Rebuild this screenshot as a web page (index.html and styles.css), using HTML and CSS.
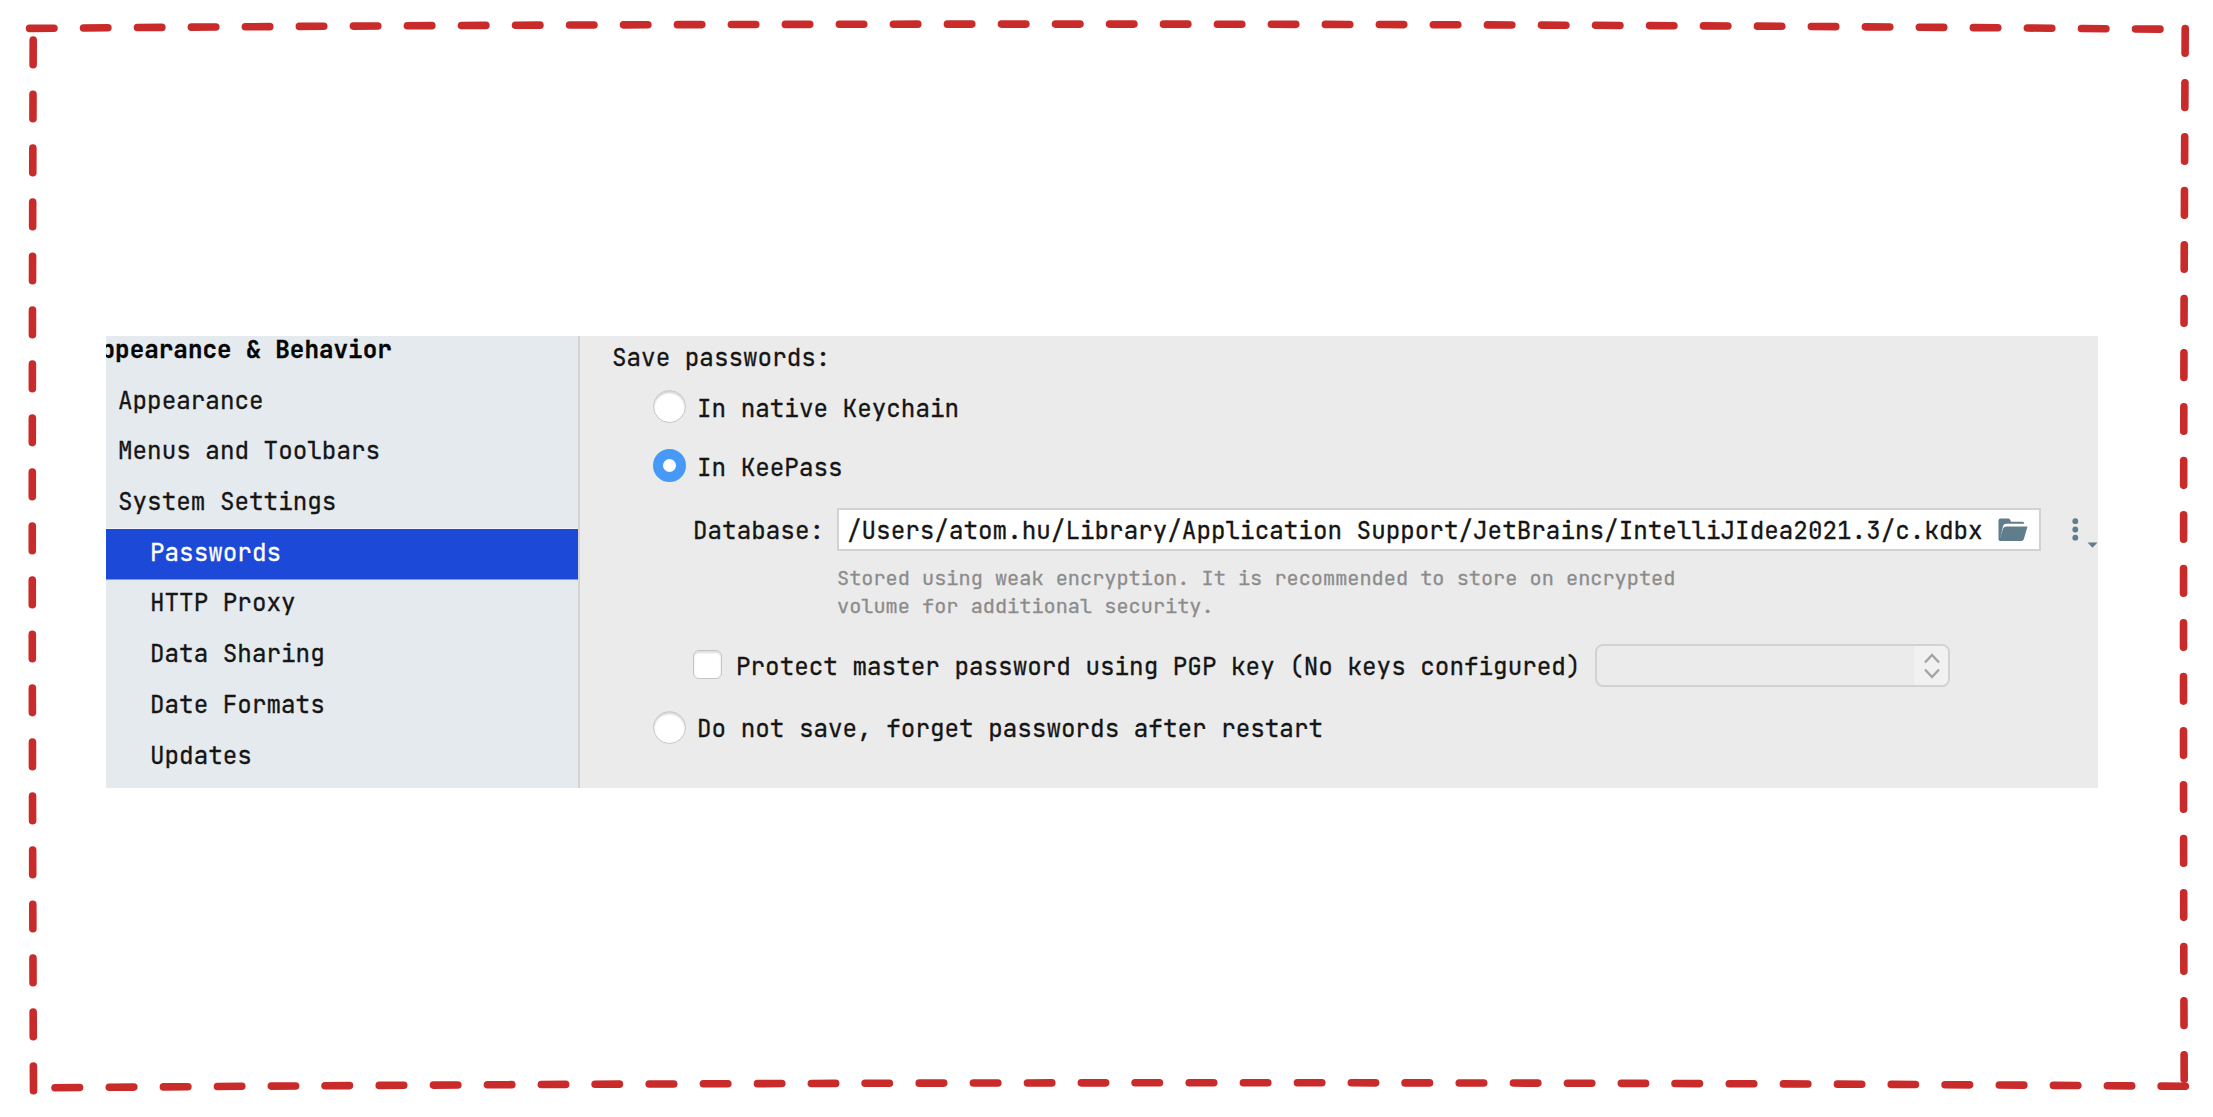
FILE: index.html
```html
<!DOCTYPE html>
<html lang="en">
<head>
<meta charset="utf-8">
<title>Passwords</title>
<link rel="stylesheet" href="styles.css">
</head>
<body>
<svg class="frame" viewBox="0 0 2213 1117" aria-hidden="true">
  <path class="h" d="M29.6 28.4Q1090 19.4 2165 29.2"/>
  <path class="h" d="M55 1087.7Q1180 1078.6 2186 1086.3"/>
  <path class="v" d="M33.2 40Q31.2 590 33.5 1093"/>
  <path class="v" d="M2185.2 28.5Q2182.4 590 2184.2 1082"/>
</svg>
<main class="window">
  <nav class="sidebar">
    <div class="item heading">Appearance &amp; Behavior</div>
    <div class="item">Appearance</div>
    <div class="item">Menus and Toolbars</div>
    <div class="item">System Settings</div>
    <div class="item sub selected">Passwords</div>
    <div class="item sub">HTTP Proxy</div>
    <div class="item sub">Data Sharing</div>
    <div class="item sub">Date Formats</div>
    <div class="item sub">Updates</div>
  </nav>
  <section class="content">
    <div class="title">Save passwords:</div>
    <div class="option native"><span class="radio"></span><span class="label">In native Keychain</span></div>
    <div class="option keepass"><span class="radio on"></span><span class="label">In KeePass</span></div>
    <div class="database">
      <span class="dblabel">Database:</span>
      <div class="field">
        <span class="path">/Users/atom.hu/Library/Application Support/JetBrains/IntelliJIdea2021.3/c.kdbx</span>
        <svg class="folder" viewBox="0 0 30 24"><path d="M.5 22V2.5Q.5.5 2.5.5H10q1.500 0 2 1l1 2.200h11.500q1.800 0 1.800 2H8q-2.200 0-2.800 2L2.200 19.500V22z"/><path d="M8.200 8.500H29.500L25.800 21.200Q25.300 23 23.400 23H2q-1.200 0-.8-1L5.200 10.300Q6 8.500 8.200 8.500z"/></svg>
      </div>
      <svg class="more" viewBox="0 0 26 30"><circle cx="3.300" cy="3.200" r="2.900"/><circle cx="3.300" cy="11.500" r="2.900"/><circle cx="3.300" cy="19.700" r="2.900"/><path d="M15.500 24.500h10l-5 5.300z"/></svg>
    </div>
    <p class="hint">Stored using weak encryption. It is recommended to store on encrypted<br>volume for additional security.</p>
    <div class="protect">
      <span class="check"></span>
      <span class="label">Protect master password using PGP key (No keys configured)</span>
      <div class="combo"><span class="stepper"><svg viewBox="0 0 18 26"><path d="M2 9.500L9 2l7 7.500M2 16.500L9 24l7-7.500"/></svg></span></div>
    </div>
    <div class="option forget"><span class="radio"></span><span class="label">Do not save, forget passwords after restart</span></div>
  </section>
</main>
</body>
</html>
```

FILE: styles.css
```css
* { box-sizing: border-box; }
body {
  margin: 0;
  width: 2213px;
  height: 1117px;
  overflow: hidden;
  background: #fff;
  color: #151515;
  font: 24.27px/32px "JetBrains Mono", "DejaVu Sans Mono", monospace;
  -webkit-text-stroke: 0.3px currentColor;
  white-space: nowrap;
}
/* hand-drawn dashed outline laid over the whole page */
.frame { position: absolute; inset: 0; width: 2213px; height: 1117px; pointer-events: none; }
.frame path { fill: none; stroke: #c92a2a; stroke-width: 7.6; stroke-linecap: round; }
.frame .h { stroke-dasharray: 24.4 29.6; }
.frame .v { stroke-dasharray: 24.6 29.4; }

.window {
  display: flex;
  width: 1992px;
  height: 452px;
  margin: 336px 0 0 106px;
  overflow: hidden;
  background: #ebebeb;
}
.sidebar {
  width: 474px;
  border-right: 2px solid #d4d4d4;
  background: #e5eaee;
  overflow: hidden;
}
.item { height: 50.7px; line-height: 46.5px; padding-left: 12px; }
.heading { margin: -10px 0 0 -32px; font-weight: bold; color: #050505; }
.sub { padding-left: 44px; }
.selected { background: #1d49d9; color: #fff; box-shadow: 0 -1px #f4f6fb, 0 1px #8098e8; }

.content { flex: 1; padding: 5px 0 0 32px; }
.title { height: 48.5px; }
.option { display: flex; align-items: center; height: 34px; padding-left: 41px; }
.option .label { margin: 2px 0 0 11px; }
.radio {
  width: 33px;
  height: 33px;
  border: 1px solid #c6c6c6;
  border-radius: 50%;
  background: #fff;
  box-shadow: inset 0 2px 2px #d4d4d4;
}
.radio.on { border: 10.5px solid #4799f7; box-shadow: none; }
.keepass { margin-top: 25px; }
.database { display: flex; align-items: center; height: 43px; margin: 25.5px 0 0 81px; }
.dblabel { width: 144px; padding-top: 1px; }
.field {
  display: flex;
  align-items: center;
  width: 1204px;
  height: 43px;
  padding-left: 8px;
  border: 2px solid #d2d2d2;
  background: #fff;
}
.path { width: 1151px; padding-top: 1px; }
.folder { width: 30px; height: 24px; fill: #607d8b; }
.more { width: 26px; height: 30px; margin: 6px 0 0 31px; fill: #607d8b; }
.hint {
  height: 57px;
  margin: 13px 0 0 225px;
  color: #8b8b8b;
  font-size: 20.25px;
  line-height: 28.3px;
}
.protect { display: flex; align-items: center; height: 43px; margin: 23px 0 0 81px; }
.check {
  width: 29px;
  height: 29px;
  margin-bottom: 2px;
  border: 1px solid #c4c4c4;
  border-radius: 6px;
  background: #fff;
  box-shadow: inset 0 2px 2px #dedede;
}
.protect .label { width: 859px; margin-left: 14px; }
.combo {
  display: flex;
  justify-content: flex-end;
  width: 355px;
  height: 43px;
  border: 2px solid #d2d2d2;
  border-radius: 8px;
}
.stepper { display: flex; align-items: center; width: 34px; padding-left: 9px; border-radius: 0 6px 6px 0; background: #f1f1f1; }
.stepper svg { width: 18px; height: 26px; fill: none; stroke: #a4a4a4; stroke-width: 2.4; }
.forget { margin-top: 23px; }
```
